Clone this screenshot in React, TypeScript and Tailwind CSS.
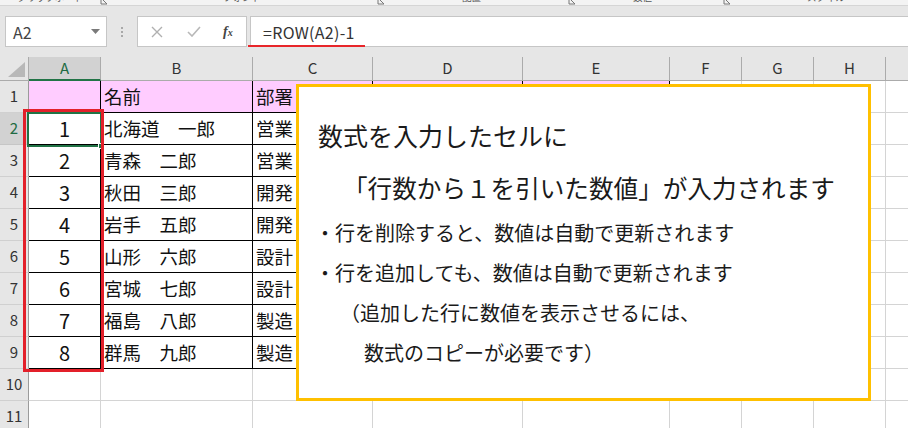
import React from "react";

const FONT = "font-['Noto_Sans_CJK_JP','Noto_Sans_JP',sans-serif]";

type Col = { key: string; w: string };

const COLS: Col[] = [
  { key: "A", w: "w-[72px]" },
  { key: "B", w: "w-[152px]" },
  { key: "C", w: "w-[120px]" },
  { key: "D", w: "w-[150px]" },
  { key: "E", w: "w-[147px]" },
  { key: "F", w: "w-[72px]" },
  { key: "G", w: "w-[72px]" },
  { key: "H", w: "w-[72px]" },
  { key: "I", w: "w-[72px]" },
];

const NUMS = ["", "1", "2", "3", "4", "5", "6", "7", "8"];
const NAMES = [
  "名前",
  "北海道　一郎",
  "青森　二郎",
  "秋田　三郎",
  "岩手　五郎",
  "山形　六郎",
  "宮城　七郎",
  "福島　八郎",
  "群馬　九郎",
];
const DEPTS = ["部署", "営業", "営業", "開発", "開発", "設計", "設計", "製造", "製造"];

// ribbon group captions, only their lower edge shows
const RIBBON = [
  { label: "クリップボード", ml: "ml-[17px]", w: "w-[50px]", gap: "ml-[33px]" },
  { label: "フォント", ml: "ml-[115px]", w: "w-[27px]", gap: "ml-[127px]" },
  { label: "配置", ml: "ml-[77px]", w: "w-[23px]", gap: "ml-[83px]" },
  { label: "数値", ml: "ml-[57px]", w: "w-[24px]", gap: "ml-[66px]" },
];

const Launcher = ({ className }: { className: string }) => (
  <svg className={className} width="8" height="14" viewBox="0 0 8 14">
    <path d="M1 6v6h6M3 8l4 4" stroke="#777" strokeWidth="1" fill="none" />
  </svg>
);

const RibbonStrip = () => (
  <div className="flex h-[5px] overflow-hidden bg-[#f3f3f3] text-[9.5px] leading-[14px] text-[#555]">
    {RIBBON.map((r) => (
      <div key={r.label} className="flex shrink-0">
        <span className={`${r.ml} ${r.w} -mt-[10px] shrink-0 whitespace-nowrap`}>{r.label}</span>
        <Launcher className={`${r.gap} -mt-[8px] shrink-0`} />
      </div>
    ))}
    <span className="ml-[76px] -mt-[10px] w-[36px] shrink-0 whitespace-nowrap">スタイル</span>
  </div>
);

const FormulaBar = () => (
  <div className="flex h-[31px] bg-[#e6e6e6]">
    <div className="ml-[5px] flex w-[102px] shrink-0 items-center justify-between border border-[#c6c6c6] bg-white pl-[7px] pr-[6px]">
      <span className="text-[16px] text-[#444]">A2</span>
      <svg width="9" height="5" viewBox="0 0 9 5">
        <path d="M0 0h9L4.5 5z" fill="#7a7a7a" />
      </svg>
    </div>
    <div className="ml-[13px] flex w-[4px] shrink-0 flex-col items-center justify-center gap-[2px]">
      <span className="h-[2px] w-[2px] bg-[#a8a8a8]" />
      <span className="h-[2px] w-[2px] bg-[#a8a8a8]" />
      <span className="h-[2px] w-[2px] bg-[#a8a8a8]" />
    </div>
    <div className="ml-[13px] flex w-[110px] shrink-0 items-center border border-[#c6c6c6] bg-white">
      <svg className="ml-[13px]" width="12" height="12" viewBox="0 0 12 12">
        <path d="M1 1l10 10M11 1L1 11" stroke="#b0b0b0" strokeWidth="1.4" />
      </svg>
      <svg className="ml-[24px]" width="14" height="11" viewBox="0 0 14 11">
        <path d="M1 6l4 4 8-9" stroke="#b8b8b8" strokeWidth="1.6" fill="none" />
      </svg>
      <span className="ml-[22px] font-['Liberation_Serif',serif] text-[14px] font-bold italic text-[#444]">
        f<span className="text-[10px]">x</span>
      </span>
    </div>
    <div className="relative ml-[3px] flex flex-1 items-center border-y border-l border-[#c6c6c6] bg-white pl-[12px]">
      <span className="text-[16px] tracking-[0.3px] text-[#333]">=ROW(A2)-1</span>
      <div className="absolute -bottom-[1px] left-[-3px] h-[2px] w-[117px] bg-[#e8262a]" />
    </div>
  </div>
);

const HeaderRow = () => (
  <div className="flex h-[24px] bg-[#e6e6e6]">
    <div className="flex w-[29px] shrink-0 items-end justify-end border-b border-r border-[#ababab] pb-[3px] pr-[3px]">
      <svg width="17" height="15" viewBox="0 0 17 15">
        <path d="M0 15h17V0z" fill="#b8b8b8" />
      </svg>
    </div>
    {COLS.map((c) =>
      c.key === "A" ? (
        <div
          key={c.key}
          className={`${c.w} flex shrink-0 items-center justify-center border-b-2 border-r border-b-[#217346] border-r-[#ababab] bg-[#d2d2d2] text-[15px] text-[#1f6b43]`}
        >
          {c.key}
        </div>
      ) : (
        <div
          key={c.key}
          className={`${c.w} flex shrink-0 items-center justify-center border-b border-r border-[#ababab] text-[15px] text-[#333]`}
        >
          {c.key}
        </div>
      )
    )}
  </div>
);

const BodyRow = ({ r }: { r: number }) => {
  const inTable = r <= 9;
  const selected = r === 2;
  return (
    <div className="flex h-[32px]">
      <div
        className={`flex w-[29px] shrink-0 items-center justify-center border-b border-r text-[15px] ${
          selected
            ? "border-b-[#c6c6c6] border-r-[#9b9b9b] bg-[#d2d2d2] text-[#1f6b43]"
            : "border-b-[#d0d0d0] border-r-[#9b9b9b] bg-[#e6e6e6] text-[#333]"
        }`}
      >
        {r}
      </div>
      {COLS.map((c, i) => {
        const table = inTable && i < 5;
        const pink = r === 1 && i < 5;
        let text = "";
        if (inTable && c.key === "A") text = NUMS[r - 1];
        if (inTable && c.key === "B") text = NAMES[r - 1];
        if (inTable && c.key === "C") text = DEPTS[r - 1];
        return (
          <div
            key={c.key}
            className={`${c.w} flex shrink-0 items-center overflow-hidden whitespace-nowrap border-b border-r ${
              table ? "border-black" : "border-[#d4d4d4]"
            } ${pink ? "bg-[#ffccff]" : "bg-white"} ${
              c.key === "A"
                ? "justify-center text-[20px]"
                : "pl-[3px] text-[18.5px]"
            } text-[#111]`}
          >
            {text}
          </div>
        );
      })}
    </div>
  );
};

const NoteBox = () => (
  <div className="absolute left-[296px] top-[84px] h-[317px] w-[575px] border-[3px] border-[#ffc000] bg-white pt-[22px] text-[#1a1a1a]">
    <p className="pl-[19px] text-[25px] leading-[52px]">数式を入力したセルに</p>
    <p className="pl-[44px] text-[24.6px] leading-[52px]">「行数から１を引いた数値」が入力されます</p>
    <p className="pl-[16px] text-[20px] leading-[40px]">・行を削除すると、数値は自動で更新されます</p>
    <p className="pl-[16px] text-[20px] leading-[40px]">・行を追加しても、数値は自動で更新されます</p>
    <p className="pl-[41px] text-[20px] leading-[40px]">（追加した行に数値を表示させるには、</p>
    <p className="pl-[65px] text-[20px] leading-[40px]">数式のコピーが必要です）</p>
  </div>
);

export default function App() {
  const rows = Array.from({ length: 11 }, (_, i) => i + 1);
  return (
    <div className={`relative h-[428px] w-[908px] overflow-hidden bg-white ${FONT}`}>
      <RibbonStrip />
      <div className="h-[11px] border-t border-[#d5d5d5] bg-[#e6e6e6]" />
      <FormulaBar />
      <div className="h-[10px] bg-[#e6e6e6]" />
      <HeaderRow />
      {rows.map((r) => (
        <BodyRow key={r} r={r} />
      ))}

      {/* selection on A2 */}
      <div className="absolute left-[27px] top-[112px] h-[35px] w-[75px] border-2 border-[#217346]">
        <div className="absolute -bottom-[4px] -right-[4px] h-[6px] w-[6px] border border-white bg-[#217346]" />
      </div>
      {/* red highlight around A2:A9 */}
      <div className="absolute left-[23px] top-[109px] h-[263px] w-[81px] border-[3.5px] border-[#e3202a]" />

      <NoteBox />
    </div>
  );
}
